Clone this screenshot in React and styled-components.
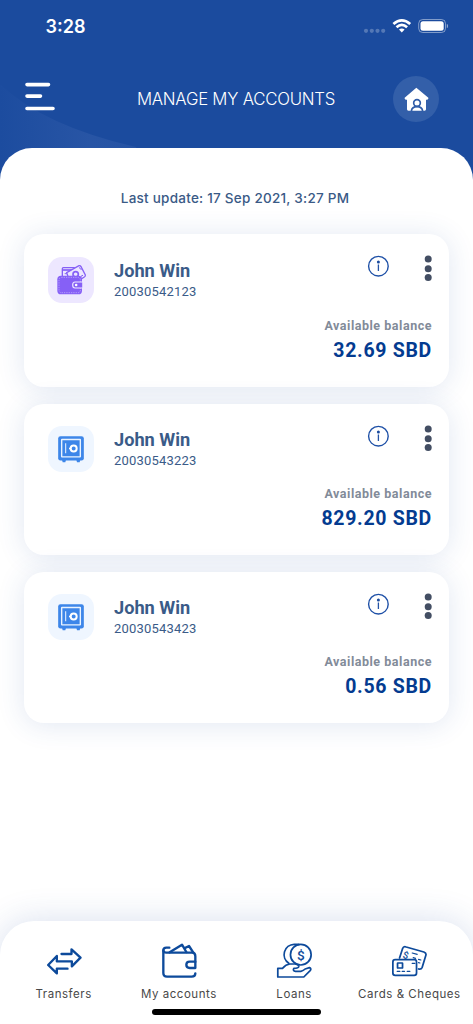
import React from 'react'
import styled, { createGlobalStyle } from 'styled-components'

const accounts = [
    { id: 1, type: 'wallet', name: 'John Win', number: '20030542123', balance: '32.69 SBD' },
    { id: 2, type: 'safe', name: 'John Win', number: '20030543223', balance: '829.20 SBD' },
    { id: 3, type: 'safe', name: 'John Win', number: '20030543423', balance: '0.56 SBD' },
]

const StatusIcons = () => (
    <svg width="88" height="20" viewBox="0 0 88 20">
        <g fill="#fff" fillOpacity="0.25">
            <circle cx="6" cy="14.8" r="2.1"/>
            <circle cx="11.8" cy="14.8" r="2.1"/>
            <circle cx="17.5" cy="14.8" r="2.1"/>
            <circle cx="23.2" cy="14.8" r="2.1"/>
        </g>
        <g fill="none" stroke="#fff" strokeWidth="2.7">
            <path d="M33.4 8.1Q41.8 0.6 50.2 8.1"/>
            <path d="M36.5 11.3Q41.8 6.6 47.1 11.3"/>
        </g>
        <path d="M39 13.6Q41.8 11.3 44.6 13.6L41.8 16.6Z" fill="#fff"/>
        <rect x="58.7" y="3.5" width="26.8" height="13" rx="4" fill="none" stroke="#fff" strokeOpacity="0.45"/>
        <rect x="60.5" y="5.2" width="23.2" height="9.6" rx="2.5" fill="#fff"/>
        <path d="M86.8 8v4q1.5-.5 1.5-2t-1.5-2z" fill="#fff" fillOpacity="0.5"/>
    </svg>
)

const MenuIcon = () => (
    <svg width="30" height="29" viewBox="0 0 30 29" stroke="#fff" strokeWidth="3.6" strokeLinecap="round">
        <path d="M2 2.6H23.5M2 14.1H15.5M2 26.5H28"/>
    </svg>
)

const HomeIcon = () => (
    <svg width="46" height="46" viewBox="0 0 138 138">
        <path d="M70 35L106 65Q107 71 99 71V100Q99 104 95 104H46Q42 104 42 100V71Q34 71 35 65Z" fill="#fff"/>
        <g fill="none" stroke="#2f5ca8" strokeWidth="5">
            <circle cx="72" cy="81" r="10"/>
            <path d="M55 105Q57 92 72 92T89 105"/>
        </g>
    </svg>
)

const WalletBadgeIcon = () => (
    <svg width="46" height="46" viewBox="113 95 138 138">
        <g fill="#ede7ff" stroke="#8660f6" strokeWidth="4">
            <rect x="156" y="127" width="38" height="32" rx="3"/>
            <path d="M158 134H188" strokeWidth="5"/>
            <path d="M163 145H172" strokeWidth="3"/>
            <path d="M169 142L206 121Q210 120 212 124L225 149Q226 153 222 155L211 162H176Z"/>
            <circle cx="196" cy="147" r="8" strokeWidth="5"/>
            <path d="M207 126Q208 132 214 132M218 150Q212 150 211 156" strokeWidth="3"/>
        </g>
        <rect x="141" y="151" width="74" height="56" rx="11" fill="#8660f6"/>
        <rect x="146" y="156" width="64" height="46" rx="7" fill="none" stroke="#cdbdff" strokeWidth="1.8" strokeDasharray="4 3"/>
        <path d="M218 170H194Q187 170 187 179T194 188H218Z" fill="#8660f6" stroke="#ede7ff" strokeWidth="3.5"/>
        <circle cx="197.5" cy="179" r="3.8" fill="#fff"/>
        <path d="M219 168V190" stroke="#ede7ff" strokeWidth="5"/>
    </svg>
)

const SafeBadgeIcon = () => (
    <svg width="46" height="46" viewBox="23 17 138 138">
        <path d="M65 118H77L75 126H67ZM108 118H120L118 126H110Z" fill="#3d86e9"/>
        <rect x="53.5" y="47.5" width="77" height="73" rx="7" fill="#3d86e9"/>
        <rect x="64" y="57.5" width="56" height="52" rx="1" fill="none" stroke="#e9f3ff" strokeWidth="4.2"/>
        <path d="M76 69V99" stroke="#e9f3ff" strokeWidth="3.2"/>
        <circle cx="100" cy="84.5" r="9" fill="none" stroke="#fff" strokeWidth="6"/>
        <path d="M86 84.5H91" stroke="#fff" strokeWidth="4"/>
    </svg>
)

const InfoIcon = () => (
    <svg width="22" height="22" viewBox="0 0 22 22">
        <circle cx="11.4" cy="11.2" r="9.8" fill="none" stroke="#1d4fa6" strokeWidth="1.4"/>
        <circle cx="11.4" cy="6.9" r="1.5" fill="#1b4b9e"/>
        <path d="M11.4 9.5V16" stroke="#2553a5" strokeWidth="1.3"/>
    </svg>
)

const MoreIcon = () => (
    <svg width="8" height="26" viewBox="0 0 8 26" fill="#434e63">
        <circle cx="4.2" cy="4" r="3.5"/>
        <circle cx="4.2" cy="13.7" r="3.5"/>
        <circle cx="4.2" cy="22.4" r="3.5"/>
    </svg>
)

const TransfersIcon = () => (
    <NavSvg viewBox="136.5 99 108 108">
        <path d="M183 132H213V118L240 143L214 169V154H169V138L143 165L169 190V176H201"/>
    </NavSvg>
)

const AccountsIcon = () => (
    <NavSvg viewBox="482 99 108 108">
        <path d="M507 113H498Q489 113 489 121V189Q489 200 500 200H574Q585 200 585 190"/>
        <path d="M489 121Q489 128 498 128H576Q585 128 585 139V155"/>
        <path d="M585 155H568Q558 155 558 164.5T568 174H585Z"/>
        <path d="M508 127L545 104L558 126M552 115L566 108L579 128"/>
    </NavSvg>
)

const LoansIcon = () => (
    <NavSvg viewBox="128.6 99 108 108" $thin>
        <circle cx="203" cy="134" r="31"/>
        <path d="M197 103H183A31 31 0 0 0 167 160"/>
        <path d="M134 175H148Q158 163 170 162H186Q198 164 197 170Q196 175 182 175Q178 183 187 184H203Q211 182 216 177L229 173Q236 176 231 182L212 201H134Z"/>
        <IconSign x="203" y="148.5" fontSize="41">$</IconSign>
    </NavSvg>
)

const CardsIcon = () => (
    <NavSvg viewBox="474.4 99 108 108" $thin>
        <rect x="480" y="149" width="71" height="47" rx="7"/>
        <rect x="494" y="159" width="15" height="15" rx="1"/>
        <path d="M493 184H501M508 184H515M523 184H531M538 160H546" strokeWidth="4"/>
        <path d="M500 144L509 116Q512 108 520 111L573 126Q581 129 579 136L568 172Q565 179 557 177"/>
        <path d="M538 129L553 133M541 143L548 145M557 148L564 150M557 158L561 159" strokeWidth="3.5"/>
        <IconSign x="519" y="146" fontSize="29" transform="rotate(15 519 136)">$</IconSign>
    </NavSvg>
)

const navItems = [
    { label: 'Transfers', Icon: TransfersIcon },
    { label: 'My accounts', Icon: AccountsIcon },
    { label: 'Loans', Icon: LoansIcon },
    { label: 'Cards & Cheques', Icon: CardsIcon },
]

const AccountCard = ({ account, tall }) => (
    <Card $tall={tall}>
        <CardTop>
            <Badge $type={account.type}>
                {account.type === 'wallet' ? <WalletBadgeIcon/> : <SafeBadgeIcon/>}
            </Badge>
            <Owner>
                <OwnerName>{account.name}</OwnerName>
                <OwnerNumber>{account.number}</OwnerNumber>
            </Owner>
            <CardActions $tall={tall}>
                <InfoIcon/>
                <MoreIcon/>
            </CardActions>
        </CardTop>
        <BalanceLabel>Available balance</BalanceLabel>
        <Balance>{account.balance}</Balance>
    </Card>
)

const App = () => {
    return (
        <Screen>
            <GlobalStyle/>
            <HeaderWave viewBox="0 0 160 110">
                <path d="M0 0Q44 42 136 63L150 110H0Z" fill="url(#wave)"/>
                <defs>
                    <linearGradient id="wave" x1="0" x2="1">
                        <stop offset="0" stopColor="#1c4c9f"/>
                        <stop offset="0.6" stopColor="#2855a5"/>
                        <stop offset="1" stopColor="#2553a4"/>
                    </linearGradient>
                </defs>
            </HeaderWave>

            <StatusBar>
                <Clock>3:28</Clock>
                <StatusIcons/>
            </StatusBar>

            <Header>
                <MenuIcon/>
                <Title>MANAGE MY ACCOUNTS</Title>
                <HomeButton><HomeIcon/></HomeButton>
            </Header>

            <Sheet>
                <LastUpdate>Last update: 17 Sep 2021, 3:27 PM</LastUpdate>
                <CardList>
                    {accounts.map((account, index) => (
                        <AccountCard key={account.id} account={account} tall={index === 0}/>
                    ))}
                </CardList>
                <BottomNav>
                    <NavList>
                        {navItems.map(({ label, Icon }) => (
                            <NavItem key={label}>
                                <Icon/>
                                <NavLabel>{label}</NavLabel>
                            </NavItem>
                        ))}
                    </NavList>
                    <HomeIndicator/>
                </BottomNav>
            </Sheet>
        </Screen>
    )
}

const GlobalStyle = createGlobalStyle`
    body {
        margin: 0;
        background: #fff;
        font-family: Roboto, 'Liberation Sans', sans-serif;
    }

    svg {
        display: block;
        flex-shrink: 0;
    }
`

const Screen = styled.div`
    position: relative;
    display: flex;
    flex-direction: column;
    width: 473px;
    height: 1024px;
    overflow: hidden;
    background: #1b4b9e;
`

/* decorative curve behind the header content */
const HeaderWave = styled.svg`
    position: absolute;
    top: 84px;
    left: 0;
    width: 160px;
    height: 110px;
`

const StatusBar = styled.div`
    position: relative;
    display: flex;
    align-items: center;
    justify-content: space-between;
    height: 52px;
    padding: 0 25px 0 45.5px;
    box-sizing: border-box;
`

const Clock = styled.div`
    color: #fff;
    font-family: Inter, sans-serif;
    font-size: 18px;
    font-weight: 600;
`

const Header = styled.div`
    position: relative;
    display: flex;
    align-items: center;
    justify-content: space-between;
    height: 95.5px;
    padding: 0 34px 1px 25px;
    box-sizing: border-box;

    > svg {
        margin-top: -6px;
    }
`

const Title = styled.div`
    margin-left: 24px;
    color: #fff;
    font-family: Inter, sans-serif;
    font-size: 16.8px;
    font-weight: 350;
    letter-spacing: -0.24px;
    white-space: nowrap;
`

const HomeButton = styled.div`
    width: 46px;
    height: 46px;
    border-radius: 50%;
    background: #335fa9;
`

const Sheet = styled.div`
    position: relative;
    display: flex;
    flex: 1;
    flex-direction: column;
    border-radius: 32px 32px 0 0;
    background: #fff;
`

const LastUpdate = styled.div`
    padding: 40px 3px 1px 0;
    color: #3a5a86;
    font-family: Inter, sans-serif;
    font-size: 13.5px;
    font-weight: 500;
    line-height: 20px;
    letter-spacing: 0.24px;
    text-align: center;
`

const CardList = styled.div`
    display: flex;
    flex-direction: column;
    gap: 17px;
    padding: 25.5px 24px 0;
`

const Card = styled.div`
    display: flex;
    flex-direction: column;
    height: ${props => (props.$tall ? 153 : 151)}px;
    padding: ${props => (props.$tall ? 23 : 22)}px 17px 24px 24px;
    box-sizing: border-box;
    border-radius: 20px;
    background: #fff;
    box-shadow: 0 2px 28px rgba(40, 85, 165, 0.14);
`

const CardTop = styled.div`
    display: flex;
    align-items: flex-start;
`

const Badge = styled.div`
    width: 46px;
    height: 46px;
    border-radius: 14px;
    background: ${props => (props.$type === 'wallet' ? '#ede7ff' : '#eff6ff')};
`

const Owner = styled.div`
    margin-left: 20px;
    color: #3a5b88;
`

const OwnerName = styled.div`
    padding-top: 2px;
    font-size: 18.2px;
    font-weight: 700;
    line-height: 24px;
`

const OwnerNumber = styled.div`
    margin-top: -1px;
    font-size: 13px;
    line-height: 20px;
    letter-spacing: 0.2px;
`

const CardActions = styled.div`
    display: flex;
    align-items: flex-start;
    gap: 35px;
    margin-left: auto;
    margin-top: ${props => (props.$tall ? -2 : -1)}px;
`

const BalanceLabel = styled.div`
    margin-top: auto;
    color: #828b99;
    font-size: 12.5px;
    font-weight: 700;
    line-height: 20px;
    letter-spacing: 0.53px;
    text-align: right;
`

const Balance = styled.div`
    padding-top: 2px;
    margin-bottom: -1px;
    color: #043b90;
    font-size: 19.5px;
    font-weight: 700;
    line-height: 26px;
    letter-spacing: 0.7px;
    text-align: right;
`

const BottomNav = styled.div`
    display: flex;
    flex-direction: column;
    align-items: center;
    height: 103px;
    margin-top: auto;
    border-radius: 34px 34px 0 0;
    background: #fff;
    box-shadow: 0 0 34px rgba(40, 80, 160, 0.18);
`

const NavList = styled.div`
    display: grid;
    grid-template-columns: repeat(4, 115.25px);
    width: 461px;
    padding-top: 22px;
`

const NavItem = styled.div`
    display: flex;
    flex-direction: column;
    align-items: center;
`

const NavSvg = styled.svg`
    width: 36px;
    height: 36px;
    fill: none;
    stroke: #0d4a9b;
    stroke-width: ${props => (props.$thin ? 5.2 : 7)};
    stroke-linecap: round;
    stroke-linejoin: round;
`

const IconSign = styled.text`
    fill: #0d4a9b;
    stroke: none;
    font-family: Roboto, sans-serif;
    font-weight: 500;
    text-anchor: middle;
`

const NavLabel = styled.div`
    margin-top: 6px;
    color: #484848;
    font-family: Inter, sans-serif;
    font-size: 11.5px;
    font-weight: 400;
    line-height: 18px;
    letter-spacing: 0.54px;
    white-space: nowrap;
`

const HomeIndicator = styled.div`
    width: 169px;
    height: 6px;
    margin-top: 5.5px;
    border-radius: 3px;
    background: #000;
`

export default App
